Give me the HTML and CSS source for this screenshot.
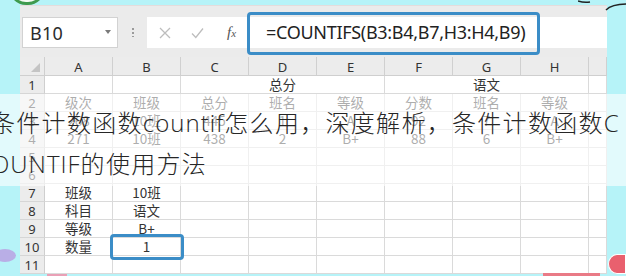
FILE: index.html
```html
<!DOCTYPE html>
<html lang="zh">
<head>
<meta charset="utf-8">
<title>COUNTIFS</title>
<link rel="stylesheet" href="styles.css">
</head>
<body>
<div class="page">
  <div class="deco deco-green"></div>
  <svg class="deco deco-arc" width="50" height="14" viewBox="0 0 50 14">
    <path d="M0 1 Q6 3 12 2" fill="none" stroke="#222" stroke-width="1.5"/>
    <path d="M28 10 Q34 4 50 4" fill="none" stroke="#222" stroke-width="1.5"/>
  </svg>
  <div class="deco deco-lilac"></div>
  <div class="deco deco-pink"></div>
  <div class="deco deco-pinkbar"></div>
  <div class="deco deco-pinkbar2"></div>

  <div class="window">
    <div class="toolbar">
      <div class="namebox"><span class="nb-text">B10</span><span class="caret"></span></div>
      <div class="sep"></div>
      <div class="iconbox">
        <svg class="ico" width="12" height="12" viewBox="0 0 12 12"><path d="M1 1 L11 11 M11 1 L1 11" stroke="#bdbdbd" stroke-width="1.3" fill="none"/></svg>
        <svg class="ico" width="13" height="12" viewBox="0 0 13 12"><path d="M1 6.5 L4.8 10.5 L12 1.5" stroke="#bdbdbd" stroke-width="1.3" fill="none"/></svg>
        <span class="fx">f<span class="fx-x">x</span></span>
      </div>
      <div class="formula">=COUNTIFS(B3:B4,B7,H3:H4,B9)</div>
      <div class="hl hl-formula"></div>
    </div>

    <div class="sheet">
      <div class="corner"><span class="tri"></span></div>
      <div class="ch">A</div><div class="ch">B</div><div class="ch">C</div><div class="ch">D</div>
      <div class="ch">E</div><div class="ch">F</div><div class="ch">G</div><div class="ch">H</div><div class="ch"></div>

      <div class="rh">1</div>
      <div class="c"></div><div class="c"></div>
      <div class="c span3">总分</div>
      <div class="c span3">语文</div>
      <div class="c"></div>

      <div class="rh">2</div>
      <div class="c">级次</div><div class="c">班级</div><div class="c">总分</div><div class="c">班名</div>
      <div class="c">等级</div><div class="c">分数</div><div class="c">班名</div><div class="c">等级</div><div class="c"></div>

      <div class="rh">3</div>
      <div class="c">268</div><div class="c">10班</div><div class="c">445</div><div class="c">1</div>
      <div class="c">A</div><div class="c">92</div><div class="c">7</div><div class="c">A</div><div class="c"></div>

      <div class="rh">4</div>
      <div class="c">271</div><div class="c">10班</div><div class="c">438</div><div class="c">2</div>
      <div class="c">B+</div><div class="c">88</div><div class="c">6</div><div class="c">B+</div><div class="c"></div>

      <div class="rh">5</div>
      <div class="c"></div><div class="c"></div><div class="c"></div><div class="c"></div>
      <div class="c"></div><div class="c"></div><div class="c"></div><div class="c"></div><div class="c"></div>

      <div class="rh">6</div>
      <div class="c"></div><div class="c"></div><div class="c"></div><div class="c"></div>
      <div class="c"></div><div class="c"></div><div class="c"></div><div class="c"></div><div class="c"></div>

      <div class="rh">7</div>
      <div class="c">班级</div><div class="c">10班</div><div class="c"></div><div class="c"></div>
      <div class="c"></div><div class="c"></div><div class="c"></div><div class="c"></div><div class="c"></div>

      <div class="rh">8</div>
      <div class="c">科目</div><div class="c">语文</div><div class="c"></div><div class="c"></div>
      <div class="c"></div><div class="c"></div><div class="c"></div><div class="c"></div><div class="c"></div>

      <div class="rh">9</div>
      <div class="c">等级</div><div class="c">B+</div><div class="c"></div><div class="c"></div>
      <div class="c"></div><div class="c"></div><div class="c"></div><div class="c"></div><div class="c"></div>

      <div class="rh">10</div>
      <div class="c">数量</div><div class="c sel">1<span class="hl hl-cell"></span></div><div class="c"></div><div class="c"></div>
      <div class="c"></div><div class="c"></div><div class="c"></div><div class="c"></div><div class="c"></div>

      <div class="rh">11</div>
      <div class="c"></div><div class="c"></div><div class="c"></div><div class="c"></div>
      <div class="c"></div><div class="c"></div><div class="c"></div><div class="c"></div><div class="c"></div>
    </div>
  </div>

  <div class="banner">条件计数函数<span class="lat">countif</span>怎么用，深度解析，条件计数函数<span class="lat">COUNTIF</span>的使用方法</div>
</div>
</body>
</html>
```

FILE: styles.css
```css
* { box-sizing: border-box; }

html, body {
  margin: 0;
  padding: 0;
}

body {
  width: 626px;
  height: 276px;
  overflow: hidden;
  background: #b6f3f8;
  font-family: "Noto Sans", "Noto Sans CJK SC", sans-serif;
}

.page {
  position: relative;
  width: 626px;
  height: 276px;
  padding: 5px 0 0 20px;
}

.window {
  width: 587px;
  height: 269px;
  background: #ebebeb;
  border-top: 1px solid #e4dcdc;
  overflow: hidden;
}

/* ---------- toolbar ---------- */
.toolbar {
  position: relative;
  height: 51px;
  display: flex;
  align-items: flex-start;
  padding: 11px 0 0 2px;
}

.namebox {
  width: 96px;
  height: 31px;
  background: #fff;
  border: 1px solid #d2d2d2;
  display: flex;
  align-items: center;
  justify-content: space-between;
  padding: 0 6px 0 7px;
}

.nb-text {
  font-size: 18px;
  color: #2b2b2b;
  letter-spacing: 0.3px;
}

.caret {
  width: 0;
  height: 0;
  border-left: 3.5px solid transparent;
  border-right: 3.5px solid transparent;
  border-top: 4px solid #7a7a7a;
  margin-bottom: 2px;
}

.sep {
  width: 2px;
  height: 10px;
  margin: 10px 13px 0 14px;
  background: radial-gradient(circle, #9a9a9a 0.9px, transparent 1.1px) 0 0 / 2px 4px repeat-y;
}

.iconbox {
  width: 99px;
  height: 31px;
  background: #fff;
  display: flex;
  align-items: center;
  padding-left: 12px;
  gap: 20px;
}

.ico { display: block; }

.fx {
  font-family: "Liberation Serif", serif;
  font-style: italic;
  font-size: 15px;
  color: #555;
  margin-left: 3px;
}
.fx-x { font-size: 11px; }

.formula {
  flex: 1;
  height: 31px;
  background: #fff;
  font-size: 18px;
  color: #222;
  line-height: 31px;
  padding-left: 20px;
  white-space: nowrap;
  letter-spacing: -0.3px;
}

.hl {
  position: absolute;
  border: 3px solid #3b8dc7;
  border-radius: 4px;
  pointer-events: none;
}

.hl-formula {
  left: 227px;
  top: 6px;
  width: 293px;
  height: 43px;
}

/* ---------- sheet ---------- */
.sheet {
  display: grid;
  grid-template-columns: 25px repeat(8, 68px) 1fr;
  grid-template-rows: 19px repeat(11, 18px);
  background: #fff;
  font-family: "Noto Sans CJK SC", "Noto Sans", sans-serif;
}

.corner, .ch, .rh, .c {
  display: flex;
  align-items: center;
  justify-content: center;
  white-space: nowrap;
}

.corner {
  background: #ececec;
  border-right: 1px solid #cfcfcf;
  border-bottom: 1px solid #cfcfcf;
  position: relative;
}

.tri {
  position: absolute;
  right: 4px;
  bottom: 3px;
  width: 0;
  height: 0;
  border-left: 9px solid transparent;
  border-bottom: 9px solid #c4c4c4;
}

.ch {
  background: #ececec;
  border-right: 1px solid #d0d0d0;
  border-bottom: 1px solid #cfcfcf;
  font-family: "Noto Sans", sans-serif;
  font-size: 13px;
  color: #333;
  padding-top: 1px;
}

.rh {
  background: #ececec;
  border-right: 1px solid #cfcfcf;
  border-bottom: 1px solid #d6d6d6;
  font-family: "Noto Sans", sans-serif;
  font-size: 13px;
  color: #333;
}

.c {
  border-right: 1px solid #dadada;
  border-bottom: 1px solid #dadada;
  font-size: 13.5px;
  color: #333;
  line-height: 1;
}

.span3 { grid-column: span 3; }

.sel { position: relative; overflow: visible; }

.hl-cell {
  left: -3px;
  top: -4px;
  width: 74px;
  height: 26px;
}

/* ---------- overlay banner ---------- */
.banner {
  position: absolute;
  left: -9px;
  top: 94px;
  width: 646px;
  height: 92px;
  padding-top: 8px;
  background: rgba(255, 255, 255, 0.6);
  font-family: "Noto Sans CJK SC", sans-serif;
  font-weight: 300;
  font-size: 24px;
  letter-spacing: 1.3px;
  line-height: 40px;
  color: #262626;
  word-break: break-all;
}

.lat {
  font-family: "Open Sans", "Noto Sans", sans-serif;
  font-weight: 300;
  letter-spacing: 1px;
}

/* ---------- decorations ---------- */
.deco { position: absolute; }

.deco-green {
  left: 9px;
  top: -12px;
  width: 36px;
  height: 17px;
  border: 3px solid #3f9a4e;
  border-top: none;
  border-radius: 0 0 18px 18px;
  background: #f4fbf4;
}

.deco-arc {
  left: 578px;
  top: 0;
}

.deco-lilac {
  left: -6px;
  top: 249px;
  width: 22px;
  height: 13px;
  border-radius: 50%;
  background: #b9aee6;
}

.deco-pink {
  left: 608px;
  top: 254px;
  width: 18px;
  height: 20px;
  border-radius: 50% 0 0 50%;
  background: #e9606e;
  border: 1px solid #fff;
}

.deco-pinkbar {
  left: 543px;
  top: 273px;
  width: 57px;
  height: 3px;
  background: #e97a86;
}

.deco-pinkbar2 {
  left: 47px;
  top: 274px;
  width: 20px;
  height: 2px;
  background: #e9a0b6;
}
```
